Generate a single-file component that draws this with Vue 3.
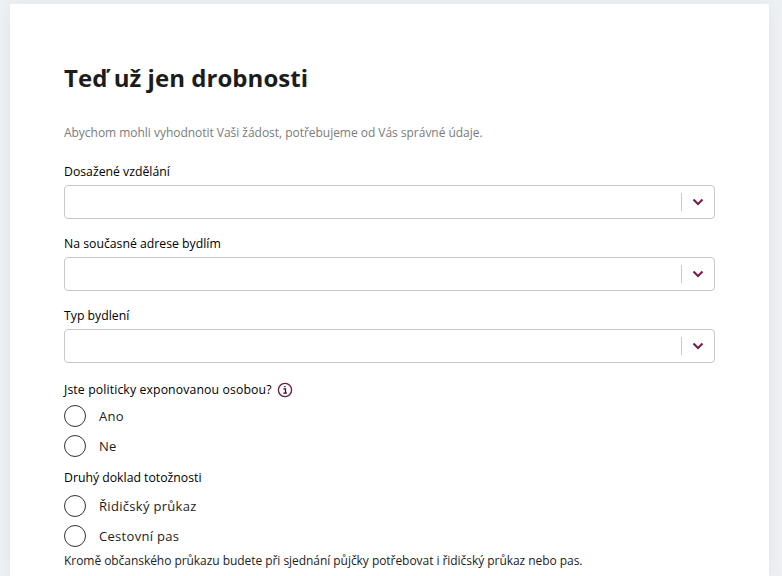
<script setup>
const selects = [
  { label: 'Dosažené vzdělání' },
  { label: 'Na současné adrese bydlím' },
  { label: 'Typ bydlení' }
]
const politicalOptions = ['Ano', 'Ne']
const documentOptions = ['Řidičský průkaz', 'Cestovní pas']
</script>

<template>
  <div class="page">
    <div class="card">
      <h1 class="title">Teď už jen drobnosti</h1>
      <p class="intro">Abychom mohli vyhodnotit Vaši žádost, potřebujeme od Vás správné údaje.</p>

      <div v-for="s in selects" :key="s.label" class="field">
        <div class="label">{{ s.label }}</div>
        <div class="select">
          <span class="divider"></span>
          <svg class="chevron" width="12" height="8" viewBox="0 0 12 8">
            <path d="M1.5 1.5 L6 6 L10.5 1.5" fill="none" stroke="#7a1a4b" stroke-width="2" />
          </svg>
        </div>
      </div>

      <div class="label with-icon">
        <span class="wide">Jste politicky exponovanou osobou?</span>
        <svg class="info" width="16" height="16" viewBox="0 0 16 16">
          <circle cx="8" cy="8" r="6.6" fill="none" stroke="#6b1a45" stroke-width="1.3" />
          <path d="M6.3 6.8 H8.5 V11 M6.3 11.2 H10 M7.2 4.6 H8.6" fill="none" stroke="#3a1026" stroke-width="1.3" />
        </svg>
      </div>
      <div class="radios">
        <label v-for="o in politicalOptions" :key="o" class="radio">
          <span class="circle"></span>{{ o }}
        </label>
      </div>

      <div class="label second">Druhý doklad totožnosti</div>
      <div class="radios docs">
        <label v-for="o in documentOptions" :key="o" class="radio">
          <span class="circle"></span>{{ o }}
        </label>
      </div>
      <p class="note">Kromě občanského průkazu budete při sjednání půjčky potřebovat i řidičský průkaz nebo pas.</p>
    </div>
  </div>
</template>

<style scoped>
.page {
  height: 576px;
  overflow: hidden;
  background: #edf1f4;
  padding: 4px 13px 0 10px;
  box-sizing: border-box;
  font-family: "Open Sans", "Noto Sans", sans-serif;
}

.card {
  height: 572px;
  background: #fff;
  padding: 56px 54px 0;
  box-sizing: border-box;
  box-shadow: 0 0 12px rgba(200, 210, 218, 0.35);
}

.title {
  margin: 0;
  font-size: 24px;
  line-height: 36px;
  font-weight: 700;
  letter-spacing: 0.05px;
  color: #1c1c1c;
}

.intro {
  margin: 28px 0 0;
  font-size: 12px;
  line-height: 18px;
  letter-spacing: -0.03px;
  color: #7b7b7b;
}

.field {
  margin-top: 21px;
}

.field + .field {
  margin-top: 16px;
}

.label {
  font-size: 12.25px;
  line-height: 18px;
  font-weight: 500;
  color: #000;
}

.wide {
  letter-spacing: 0.12px;
}

.select {
  margin-top: 4px;
  height: 34px;
  border: 1px solid #c9c9c9;
  border-radius: 4px;
  box-sizing: border-box;
  display: flex;
  align-items: center;
  justify-content: flex-end;
  padding-right: 10px;
}

.divider {
  width: 1px;
  height: 18px;
  background: #c9c9c9;
  margin-right: 10px;
}

.with-icon {
  margin-top: 18px;
  display: flex;
  align-items: center;
  gap: 5px;
}

.second {
  margin-top: 12px;
}

.radios {
  margin-top: 6px;
  display: flex;
  flex-direction: column;
  gap: 8px;
}

.docs {
  margin-top: 8px;
}

.radio {
  display: flex;
  align-items: center;
  gap: 13px;
  height: 22px;
  font-size: 13px;
  letter-spacing: 0.3px;
  color: #1c1c1c;
}

.circle {
  width: 22px;
  height: 22px;
  border: 1.3px solid #333;
  border-radius: 50%;
  box-sizing: border-box;
  flex: none;
}

.note {
  margin: 5px 0 0;
  font-size: 12px;
  line-height: 18px;
  letter-spacing: -0.05px;
  color: #1c1c1c;
}
</style>
